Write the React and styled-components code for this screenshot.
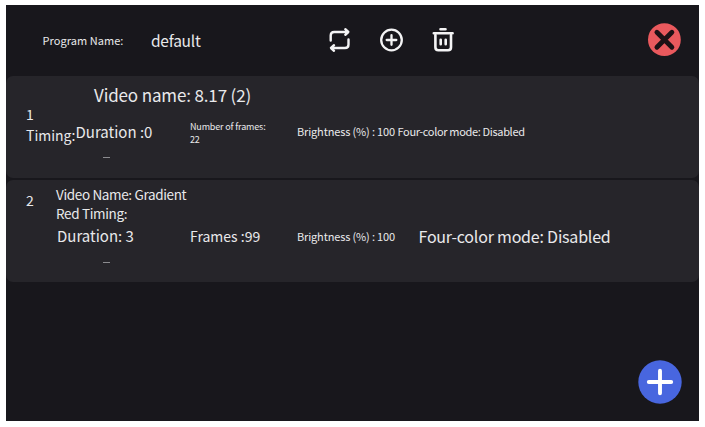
import styled, { createGlobalStyle } from "styled-components";

const GlobalStyle = createGlobalStyle`
  * {
    box-sizing: border-box;
  }
  body {
    margin: 0;
    background: #ffffff;
    font-family: "Noto Sans CJK SC", "Noto Sans", sans-serif;
  }
`;

const Screen = styled.main`
  display: flex;
  flex-direction: column;
  width: 693px;
  height: 416px;
  margin: 5px 6px 6px;
  background: #18171c;
  color: #e9e9eb;
`;

const Header = styled.header`
  display: grid;
  grid-template-columns: 108.5px 177px 52px 52px 1fr auto;
  align-items: center;
  height: 71px;
  padding: 0 18px 2px 36.5px;
`;

const Text = styled.span`
  display: block;
  font-size: ${(p) => p.$size}px;
  line-height: ${(p) => p.$line || 20}px;
  letter-spacing: ${(p) => p.$track || 0}px;
  margin-top: ${(p) => p.$drop || 0}px;
  white-space: pre;
`;

const IconButton = styled.button`
  display: flex;
  padding: 0;
  border: 0;
  background: none;
  color: #f4f4f5;
`;

const ProgramList = styled.section`
  display: flex;
  flex-direction: column;
  gap: 2px;
`;

const Card = styled.article`
  height: 102px;
  border-radius: 7px;
  background: #26252a;
  padding-left: 20px;
`;

const Title = styled.div`
  padding: 7px 0 0 68px;
`;

const Metrics = styled.div`
  display: grid;
  grid-template-columns: ${(p) => p.$columns};
  align-items: start;
  height: ${(p) => p.$height}px;
`;

const Heading = styled.div`
  display: grid;
  grid-template-columns: 30px 1fr;
  align-items: start;
  height: 46px;
  padding-top: 5px;
`;

const Dash = styled.div`
  width: 7px;
  height: 1px;
  margin-left: 77px;
  background: #8b8b8f;
`;

const Footer = styled.footer`
  display: flex;
  justify-content: flex-end;
  margin-top: auto;
  padding: 0 17px 17px 0;
`;

const RepeatIcon = () => (
  <svg width="24" height="26" viewBox="0 0 24 26" fill="none" stroke="currentColor" strokeWidth="2.4" strokeLinecap="round" strokeLinejoin="round">
    <path d="M2.7 13.5V8.5Q2.7 5 6.2 5H20M17.3 2.2l3 2.8-3 2.8" />
    <path d="M20.5 12.5v5q0 3.5-3.5 3.5H3.3M6 18.2l-3 2.8 3 2.8" />
  </svg>
);

const AddIcon = () => (
  <svg width="24" height="24" viewBox="0 0 24 24" fill="none" stroke="currentColor" strokeWidth="2.3" strokeLinecap="round">
    <circle cx="11.5" cy="12" r="10.3" />
    <path d="M11.5 7.2v9.6M6.7 12h9.6" />
  </svg>
);

const TrashIcon = () => (
  <svg width="22" height="26" viewBox="0 0 22 26" fill="none" stroke="currentColor" strokeWidth="2.6" strokeLinecap="round">
    <path d="M8.5 2.3h5M1.8 6.2h18.8" />
    <path d="M3.4 8v12.3q0 3 3 3h9.6q3 0 3-3V8" />
    <path d="M8.7 12.7v4.6M13.7 12.7v4.6" />
  </svg>
);

const CloseIcon = () => (
  <svg width="34" height="34" viewBox="0 0 34 34">
    <circle cx="17.4" cy="16.7" r="16.4" fill="#e9595d" />
    <path d="M9.9 9.2l15 15M24.9 9.2l-15 15" stroke="#1c1115" strokeWidth="4.8" strokeLinecap="round" />
  </svg>
);

const PlusIcon = () => (
  <svg width="44" height="44" viewBox="0 0 44 44">
    <circle cx="22" cy="22" r="21.7" fill="#4866df" />
    <path d="M22 10.8v22.4M10.8 22h22.4" stroke="#ffffff" strokeWidth="3.9" strokeLinecap="round" />
  </svg>
);

export default function App() {
  return (
    <>
      <GlobalStyle />
      <Screen>
        <Header>
          <Text $size={11} $track={0.05}>Program Name:</Text>
          <Text $size={15.5} $track={-0.25}>default</Text>
          <IconButton aria-label="Loop"><RepeatIcon /></IconButton>
          <IconButton aria-label="Add"><AddIcon /></IconButton>
          <IconButton aria-label="Delete"><TrashIcon /></IconButton>
          <IconButton aria-label="Close"><CloseIcon /></IconButton>
        </Header>
        <ProgramList>
          <Card>
            <Title>
              <Text $size={17} $line={24} $track={-0.14}>Video name: 8.17 (2)</Text>
            </Title>
            <Text $size={14} $line={14}>1</Text>
            <Metrics $columns="49.5px 114.5px 107px 100.5px 1fr" $height={36}>
              <Text $size={14} $drop={4}>Timing:</Text>
              <Text $size={15} $drop={1}>Duration :0</Text>
              <Text $size={9} $line={13} $track={-0.15} $drop={-1}>{"Number of frames:\n22"}</Text>
              <Text $size={11} $track={-0.15}>Brightness (%) : 100</Text>
              <Text $size={11} $track={-0.34}>Four-color mode: Disabled</Text>
            </Metrics>
            <Dash />
          </Card>
          <Card>
            <Heading>
              <Text $size={14} $drop={5}>2</Text>
              <Text $size={13.5} $line={19} $track={-0.35}>{"Video Name: Gradient\nRed Timing:"}</Text>
            </Heading>
            <Metrics $columns="31px 133px 107px 121.5px 1fr" $height={36}>
              <span />
              <Text $size={15}>Duration: 3</Text>
              <Text $size={14}>Frames :99</Text>
              <Text $size={11} $track={-0.15}>Brightness (%) : 100</Text>
              <Text $size={16} $track={-0.21}>Four-color mode: Disabled</Text>
            </Metrics>
            <Dash />
          </Card>
        </ProgramList>
        <Footer>
          <IconButton aria-label="New program"><PlusIcon /></IconButton>
        </Footer>
      </Screen>
    </>
  );
}
